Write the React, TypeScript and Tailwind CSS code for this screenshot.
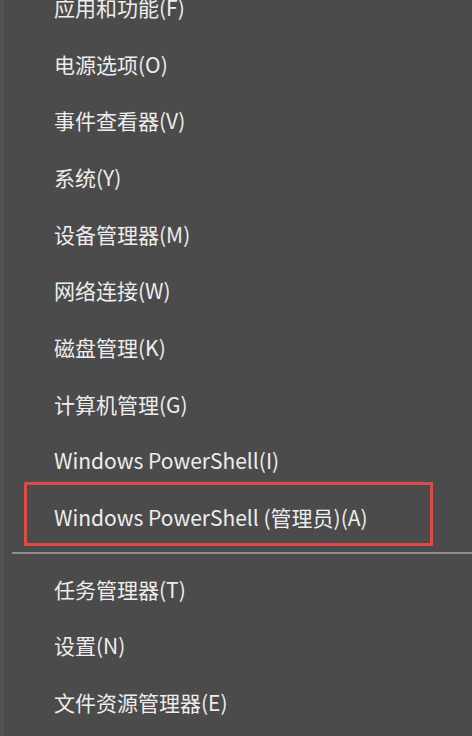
const TOP_ITEMS = [
  "应用和功能(F)",
  "电源选项(O)",
  "事件查看器(V)",
  "系统(Y)",
  "设备管理器(M)",
  "网络连接(W)",
  "磁盘管理(K)",
  "计算机管理(G)",
  "Windows PowerShell(I)",
];

const BOTTOM_ITEMS = ["任务管理器(T)", "设置(N)", "文件资源管理器(E)"];

function MenuItem({ label }: { label: string }) {
  return (
    <div className="flex h-[56.7px] items-center pl-[54px] text-[21px] leading-none text-[#ededed]">
      {label}
    </div>
  );
}

export default function App() {
  return (
    <div
      className="h-[736px] w-[472px] overflow-hidden border-l-4 border-[#525252] bg-[#4b4b4b]"
      style={{ fontFamily: '"Noto Sans CJK SC", "Noto Sans", sans-serif' }}
    >
      <div className="-ml-1 -mt-[21px]">
        {TOP_ITEMS.map((item) => (
          <MenuItem key={item} label={item} />
        ))}

        <div className="relative">
          <MenuItem label="Windows PowerShell (管理员)(A)" />
          {/* highlight box drawn over the screenshot */}
          <div className="pointer-events-none absolute left-[24px] top-[-7px] h-[64px] w-[409px] rounded-[1px] border-[3px] border-[#dc4a4a]" />
        </div>

        <div className="mb-[7px] ml-[12px] mt-[6px] h-[2px] bg-[#8e8e8e]" />

        {BOTTOM_ITEMS.map((item) => (
          <MenuItem key={item} label={item} />
        ))}
      </div>
    </div>
  );
}
